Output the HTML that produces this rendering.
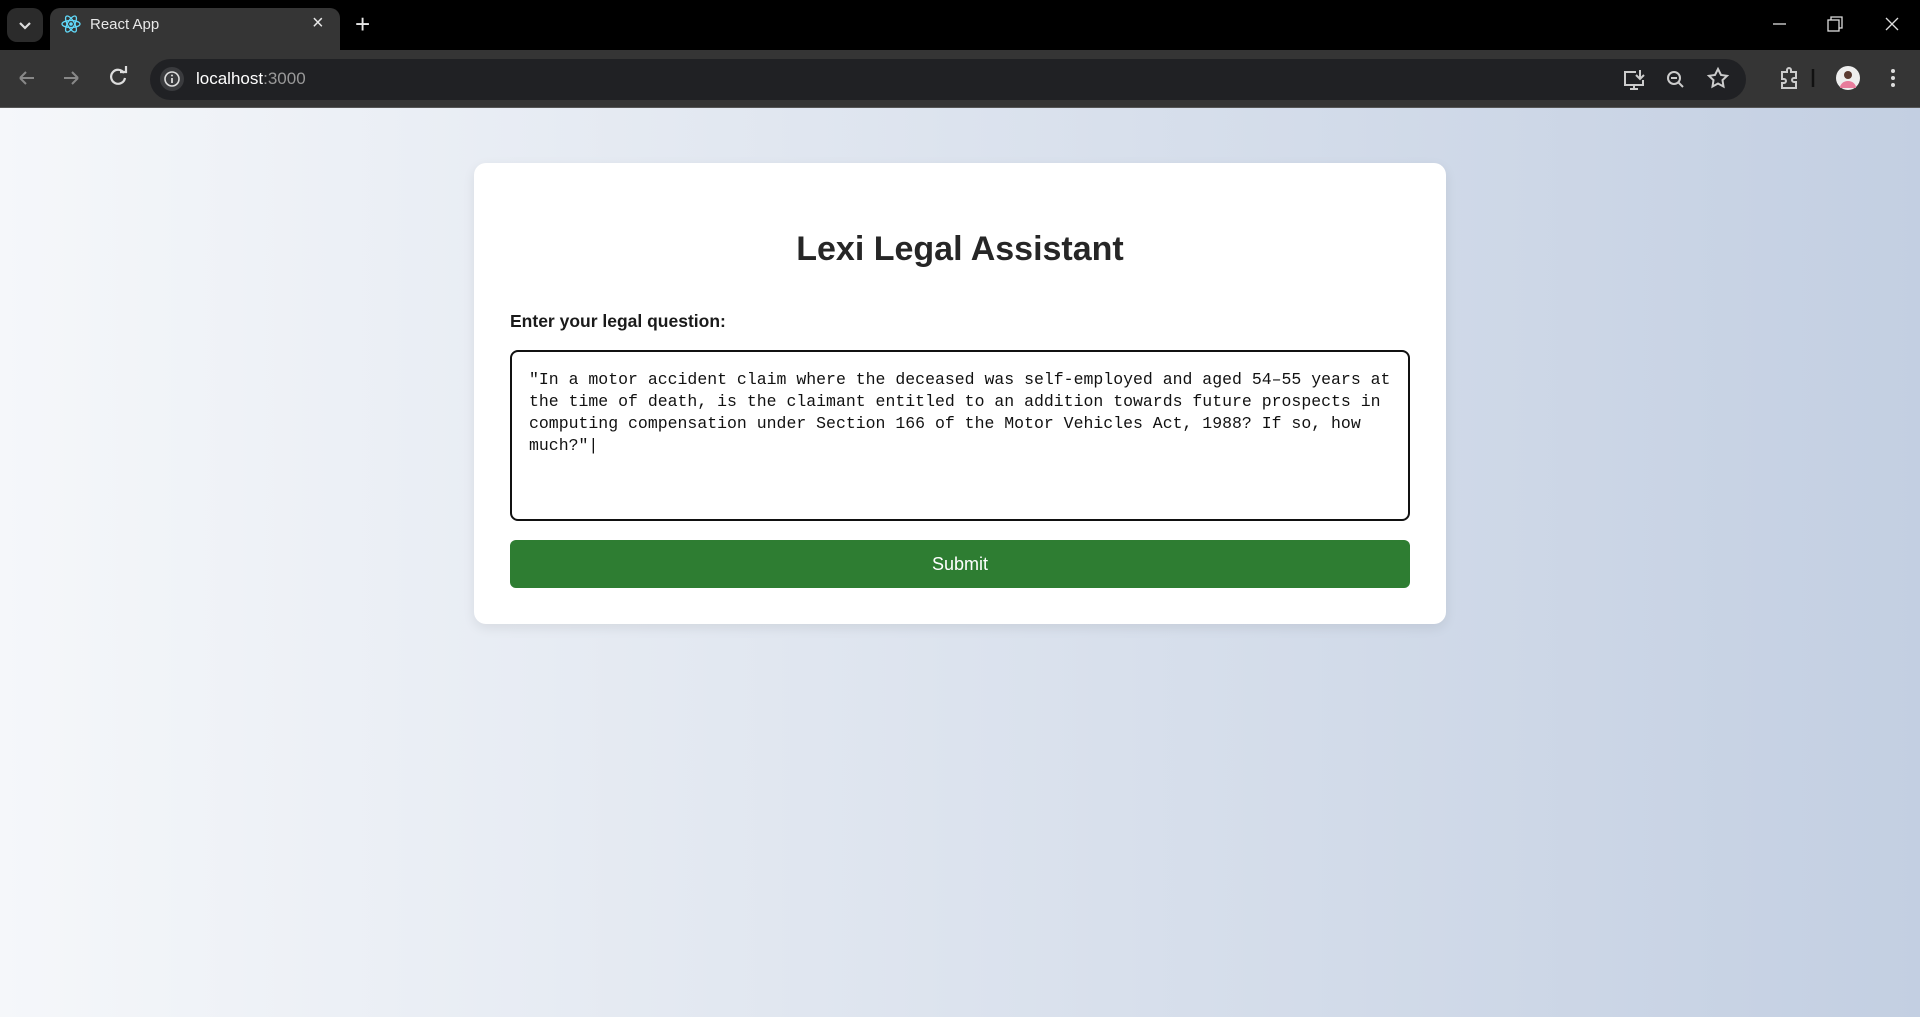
<!DOCTYPE html>
<html><head><meta charset="utf-8"><style>
*{box-sizing:border-box;margin:0;padding:0}
html,body{width:1920px;height:1017px;overflow:hidden;font-family:"Liberation Sans",sans-serif}
.tabs{position:absolute;top:0;left:0;width:1920px;height:50px;background:#000}
.toolbar{position:absolute;top:50px;left:0;width:1920px;height:58px;background:#353535;border-bottom:1px solid #555}
.tab{position:absolute;left:50px;top:8px;width:290px;height:44px;background:#353535;border-radius:10px 10px 0 0}
.dd{position:absolute;left:7px;top:8px;width:36px;height:34px;background:#2b2b2b;border-radius:10px}
.omni{position:absolute;left:150px;top:59px;width:1596px;height:41px;background:#202124;border-radius:21px}
.page{position:absolute;top:108px;left:0;width:1920px;height:909px;background:linear-gradient(90deg,#f5f7fa,#c3cfe2)}
.card{position:absolute;left:474px;top:55px;width:972px;height:461px;background:#fff;border-radius:12px;box-shadow:0 4px 12px rgba(0,0,0,.08)}
h1{position:absolute;left:0;width:100%;top:66px;text-align:center;font-size:34px;font-weight:bold;color:#262626;line-height:40px}
label{position:absolute;left:36px;top:148px;font-size:17.5px;font-weight:bold;color:#1a1a1a}
.ta{position:absolute;left:36px;top:187px;width:900px;height:171px;border:2px solid #111;border-radius:8px;padding:17px 17px;font-family:"Liberation Mono",monospace;font-size:16.5px;line-height:22px;color:#111;white-space:pre;overflow:hidden}
.btn{position:absolute;left:36px;top:377px;width:900px;height:48px;background:#2e7d32;border-radius:6px;color:#fff;font-size:18px;text-align:center;line-height:48px}
.w{color:#e8e8e8;position:absolute}
</style></head><body>
<div class="tabs"></div>
<div class="dd"><svg width="36" height="34"><path d="M13 15l5 5 5-5" stroke="#ddd" stroke-width="2.2" fill="none"/></svg></div>
<div class="tab">
<svg style="position:absolute;left:11px;top:6px" width="20" height="20" viewBox="0 0 20 20"><g stroke="#61dafb" stroke-width="1.3" fill="none"><ellipse cx="10" cy="10" rx="9" ry="3.5"/><ellipse cx="10" cy="10" rx="9" ry="3.5" transform="rotate(60 10 10)"/><ellipse cx="10" cy="10" rx="9" ry="3.5" transform="rotate(120 10 10)"/></g><circle cx="10" cy="10" r="1.8" fill="#61dafb"/></svg>
<span class="w" style="left:40px;top:8px;font-size:15px">React App</span>
<span class="w" style="left:262px;top:4px;font-size:20px">×</span>
</div>
<span class="w" style="left:355px;top:11px;font-size:26px;line-height:26px">+</span>
<svg style="position:absolute;left:1760px;top:14px" width="160" height="22"><path d="M13 10h13" stroke="#ddd" stroke-width="1.3"/><rect x="68" y="6" width="11" height="11" stroke="#ddd" fill="none" stroke-width="1.3"/><path d="M71 6v-3h11v11h-3" stroke="#ddd" fill="none" stroke-width="1.3"/><path d="M126 4l12 12M138 4l-12 12" stroke="#ddd" stroke-width="1.3"/></svg>
<div class="toolbar"></div>
<svg style="position:absolute;left:0;top:60px" width="140" height="40"><path d="M20 18h14M20 18l6-6M20 18l6 6" stroke="#888" stroke-width="2" fill="none"/><path d="M78 18h-14M78 18l-6-6M78 18l-6 6" stroke="#888" stroke-width="2" fill="none"/><path d="M124 13a7 7 0 1 0 1 5" stroke="#ddd" stroke-width="2.2" fill="none"/><path d="M120 12h6v-6" stroke="#ddd" stroke-width="2.2" fill="none"/></svg>
<div class="omni"></div>
<svg style="position:absolute;left:158px;top:65px" width="28" height="28"><circle cx="14" cy="14" r="12" fill="#3a3b3e"/><circle cx="14" cy="14" r="7" stroke="#ddd" stroke-width="1.6" fill="none"/><path d="M14 13v5" stroke="#ddd" stroke-width="1.8"/><circle cx="14" cy="10.5" r="1" fill="#ddd"/></svg>
<span style="position:absolute;left:196px;top:69px;font-size:17px;color:#fff">localhost<span style="color:#999">:3000</span></span>
<svg style="position:absolute;left:1620px;top:64px" width="300" height="32"><g stroke="#ccc" stroke-width="2" fill="none"><path d="M16 8h-11v13h18v-5"/><path d="M10 25h8M14 21v4"/><path d="M20 6v9M16 11l4 4 4-4"/><circle cx="54" cy="14" r="6"/><path d="M51 14h6M58 18l5 5"/><path d="M98 5l3 6 6 .8-4.5 4.3 1 6.4-5.5-3-5.5 3 1-6.4-4.5-4.3 6-.8z"/><path d="M162 8h5v-2a2 2 0 0 1 4 0v2h5v6h-2a2 2 0 0 0 0 4h2v6h-14v-5h2a2 2 0 0 0 0-4h-2z"/></g><path d="M193 5v18" stroke="#111" stroke-width="2.5"/><circle cx="228" cy="14" r="12" fill="#eee"/><circle cx="228" cy="11" r="4" fill="#5a3a30"/><path d="M220 24a8 7 0 0 1 16 0z" fill="#e87c9c"/><g fill="#ddd"><circle cx="273" cy="7" r="2"/><circle cx="273" cy="14" r="2"/><circle cx="273" cy="21" r="2"/></g></svg>
<div class="page">
<div class="card">
<h1>Lexi Legal Assistant</h1>
<label>Enter your legal question:</label>
<div class="ta">"In a motor accident claim where the deceased was self-employed and aged 54–55 years at
the time of death, is the claimant entitled to an addition towards future prospects in
computing compensation under Section 166 of the Motor Vehicles Act, 1988? If so, how
much?"|</div>
<div class="btn">Submit</div>
</div>
</div>
</body></html>
